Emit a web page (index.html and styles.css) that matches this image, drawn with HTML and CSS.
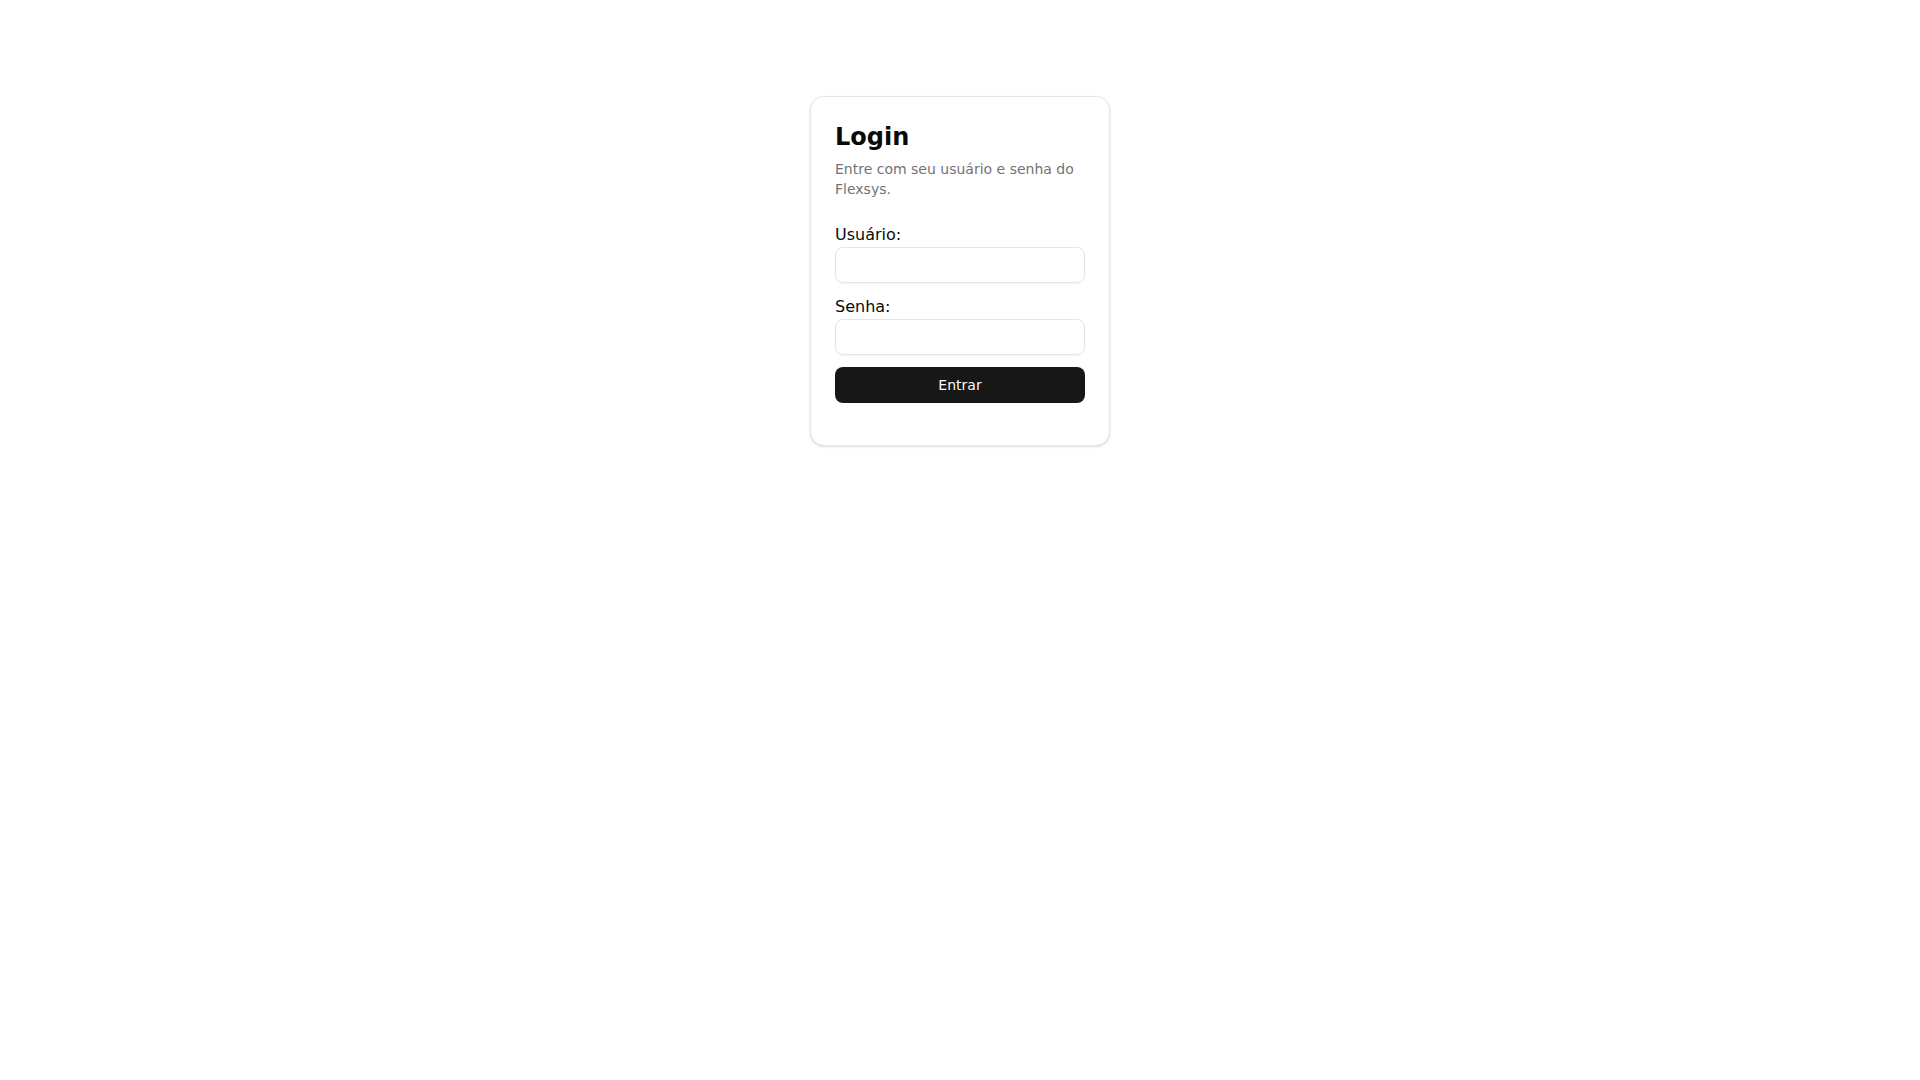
FILE: index.html
```html
<!DOCTYPE html>
<html lang="pt-BR">
<head>
    <meta charset="UTF-8">
    <meta name="viewport" content="width=device-width, initial-scale=1.0">
    <title>Login</title>
    <link rel="stylesheet" href="styles.css">
</head>
<body>

    <main class="page">
        <div class="card">
            <div class="card-header">
                <h1 class="card-title">Login</h1>
                <p class="card-description">Entre com seu usuário e senha do Flexsys.</p>
            </div>

            <form class="login-form">
                <div class="field">
                    <label for="username">Usuário:</label>
                    <input type="text" id="username" name="username" autocomplete="username">
                </div>
                <div class="field">
                    <label for="password">Senha:</label>
                    <input type="password" id="password" name="password" autocomplete="current-password">
                </div>
                <button type="submit" class="submit-button">Entrar</button>
            </form>
        </div>
    </main>

</body>
</html>
```

FILE: styles.css
```css
* {
    box-sizing: border-box;
}

body {
    margin: 0;
    font-family: "DejaVu Sans", sans-serif;
    font-size: 16px;
    line-height: 24px;
    color: #0a0a0a;
    background-color: #fff;
}

.page {
    display: flex;
    justify-content: center;
    padding: 96px 16px;
}

.card {
    width: 100%;
    max-width: 300px;
    padding: 24px 24px 42px;
    background-color: #fff;
    border: 1px solid #e5e5e5;
    border-radius: 14px;
    box-shadow: 0 1px 3px rgba(0, 0, 0, 0.1), 0 1px 2px -1px rgba(0, 0, 0, 0.1);
}

.card-header {
    margin-bottom: 24px;
}

.card-title {
    margin: 0 0 6px;
    font-size: 24px;
    line-height: 32px;
    font-weight: bold;
}

.card-description {
    margin: 0;
    font-size: 14px;
    line-height: 20px;
    color: #737373;
}

.login-form {
    display: flex;
    flex-direction: column;
    gap: 12px;
}

.field {
    display: flex;
    flex-direction: column;
}

.field input {
    width: 100%;
    height: 36px;
    padding: 4px 12px;
    font: inherit;
    font-size: 14px;
    background-color: transparent;
    border: 1px solid #e5e5e5;
    border-radius: 8px;
    box-shadow: 0 1px 2px rgba(0, 0, 0, 0.05);
}

.submit-button {
    height: 36px;
    padding: 8px 16px;
    font: inherit;
    font-size: 14px;
    line-height: 20px;
    color: #fafafa;
    background-color: #171717;
    border: none;
    border-radius: 8px;
    cursor: pointer;
}

.submit-button:hover {
    background-color: #2e2e2e;
}
```
